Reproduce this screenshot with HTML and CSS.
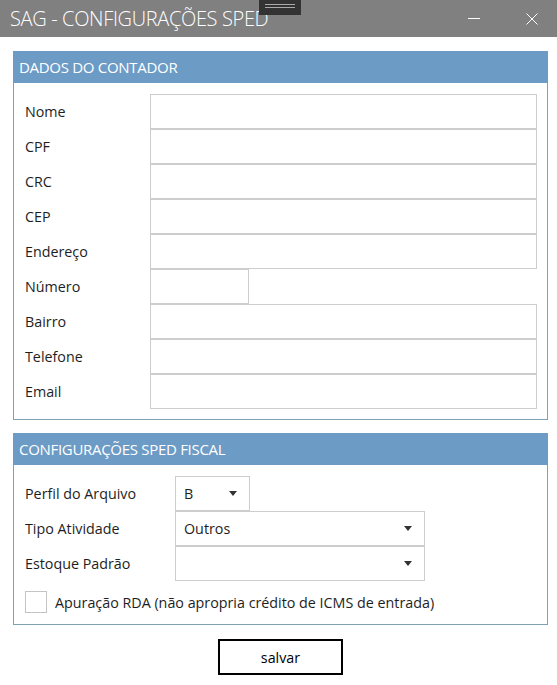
FILE: index.html
```html
<!DOCTYPE html>
<html>
<head>
<meta name="viewport" content="width=device-width, initial-scale=1">
<link rel="stylesheet" href="styles.css">
</head>
<body>

<div class="titlebar">
  <span class="title">SAG - CONFIGURAÇÕES SPED</span>
  <div class="grip"><span></span><span></span></div>
  <div class="win-buttons">
    <span class="btn-min"></span>
    <svg class="btn-close" width="12" height="12" viewBox="0 0 12 12">
      <path d="M0.5 0.5 L11.5 11.5 M11.5 0.5 L0.5 11.5" stroke="#fff" stroke-width="1" fill="none"/>
    </svg>
  </div>
</div>

<div class="content">
  <!-- dados do contador -->
  <div class="group">
    <div class="group-head">DADOS DO CONTADOR</div>
    <div class="group-body">
      <div class="row"><label>Nome</label><input type="text" class="field"></div>
      <div class="row"><label>CPF</label><input type="text" class="field"></div>
      <div class="row"><label>CRC</label><input type="text" class="field"></div>
      <div class="row"><label>CEP</label><input type="text" class="field"></div>
      <div class="row"><label>Endereço</label><input type="text" class="field"></div>
      <div class="row"><label>Número</label><input type="text" class="field short"></div>
      <div class="row"><label>Bairro</label><input type="text" class="field"></div>
      <div class="row"><label>Telefone</label><input type="text" class="field"></div>
      <div class="row"><label>Email</label><input type="text" class="field"></div>
    </div>
  </div>

  <!-- configuracoes do sped fiscal -->
  <div class="group second">
    <div class="group-head">CONFIGURAÇÕES SPED FISCAL</div>
    <div class="group-body">
      <div class="row wide"><label>Perfil do Arquivo</label>
        <div class="combo small"><span>B</span><i class="arrow"></i></div>
      </div>
      <div class="row wide"><label>Tipo Atividade</label>
        <div class="combo"><span>Outros</span><i class="arrow"></i></div>
      </div>
      <div class="row wide"><label>Estoque Padrão</label>
        <div class="combo"><span></span><i class="arrow"></i></div>
      </div>
      <div class="check-row">
        <span class="checkbox"></span>
        <span>Apuração RDA (não apropria crédito de ICMS de entrada)</span>
      </div>
    </div>
  </div>

  <div class="actions">
    <button class="save">salvar</button>
  </div>
</div>

</body>
</html>
```

FILE: styles.css
```css
body, html {
  margin: 0;
  height: 100%;
  background: #fff;
  font-family: "Open Sans", "Noto Sans", sans-serif;
  color: #1e1e1e;
}

* {
  box-sizing: border-box;
}

/* Window title bar */
.titlebar {
  position: relative;
  display: flex;
  align-items: center;
  height: 37px;
  background: #808080;
  padding-left: 10px;
}

.title {
  color: #fff;
  font-size: 20px;
  font-weight: 300;
  letter-spacing: -0.35px;
}

.grip {
  position: absolute;
  top: 0;
  left: 259px;
  width: 42px;
  height: 15px;
  background: #333;
  padding: 4px 6px 0 6px;
}

.grip span {
  display: block;
  height: 1px;
  background: #aaa;
  margin-bottom: 2px;
}

.win-buttons {
  margin-left: auto;
  display: flex;
  align-items: center;
  padding-right: 19px;
}

.btn-min {
  width: 12px;
  height: 1px;
  background: #fff;
  margin-right: 46px;
}

/* Group boxes */
.content {
  padding: 14px 9px 0 13px;
}

.group {
  border: 1px solid #7f9fb3;
}

.group.second {
  margin-top: 13px;
}

.group-head {
  margin: -1px -1px 0 -1px;
  height: 32px;
  line-height: 32px;
  background: #6c9bc6;
  color: #fff;
  font-size: 15px;
  padding-left: 6px;
  letter-spacing: -0.3px;
}

.group-body {
  padding: 11px 10px 10px 11px;
}

.second .group-body {
  padding-bottom: 11px;
}

.row {
  display: flex;
  align-items: center;
  height: 35px;
}

.row label {
  width: 125px;
  font-size: 14.3px;
}

.row.wide label {
  width: 150px;
}

.field {
  flex: 1;
  height: 35px;
  border: 1px solid #cdcdcd;
  outline: none;
  background: #fff;
  margin: 0;
}

.field.short {
  flex: none;
  width: 99px;
}

/* Drop-down boxes */
.combo {
  display: flex;
  align-items: center;
  width: 250px;
  height: 35px;
  border: 1px solid #cdcdcd;
  padding: 0 12px 0 8px;
  font-size: 14.3px;
}

.combo.small {
  width: 75px;
}

.combo span {
  flex: 1;
}

.arrow {
  width: 0;
  height: 0;
  border-left: 4px solid transparent;
  border-right: 4px solid transparent;
  border-top: 5px solid #333;
}

.check-row {
  display: flex;
  align-items: center;
  margin-top: 10px;
  font-size: 14.3px;
}

.checkbox {
  width: 22px;
  height: 22px;
  border: 1px solid #c4c4c4;
  margin-right: 8px;
}

/* Save button */
.actions {
  display: flex;
  justify-content: center;
  margin-top: 14px;
}

.save {
  width: 125px;
  height: 36px;
  background: #fff;
  border: 2px solid #000;
  font-family: "Open Sans", "Noto Sans", sans-serif;
  font-size: 14.3px;
  color: #000;
  cursor: pointer;
}
```
